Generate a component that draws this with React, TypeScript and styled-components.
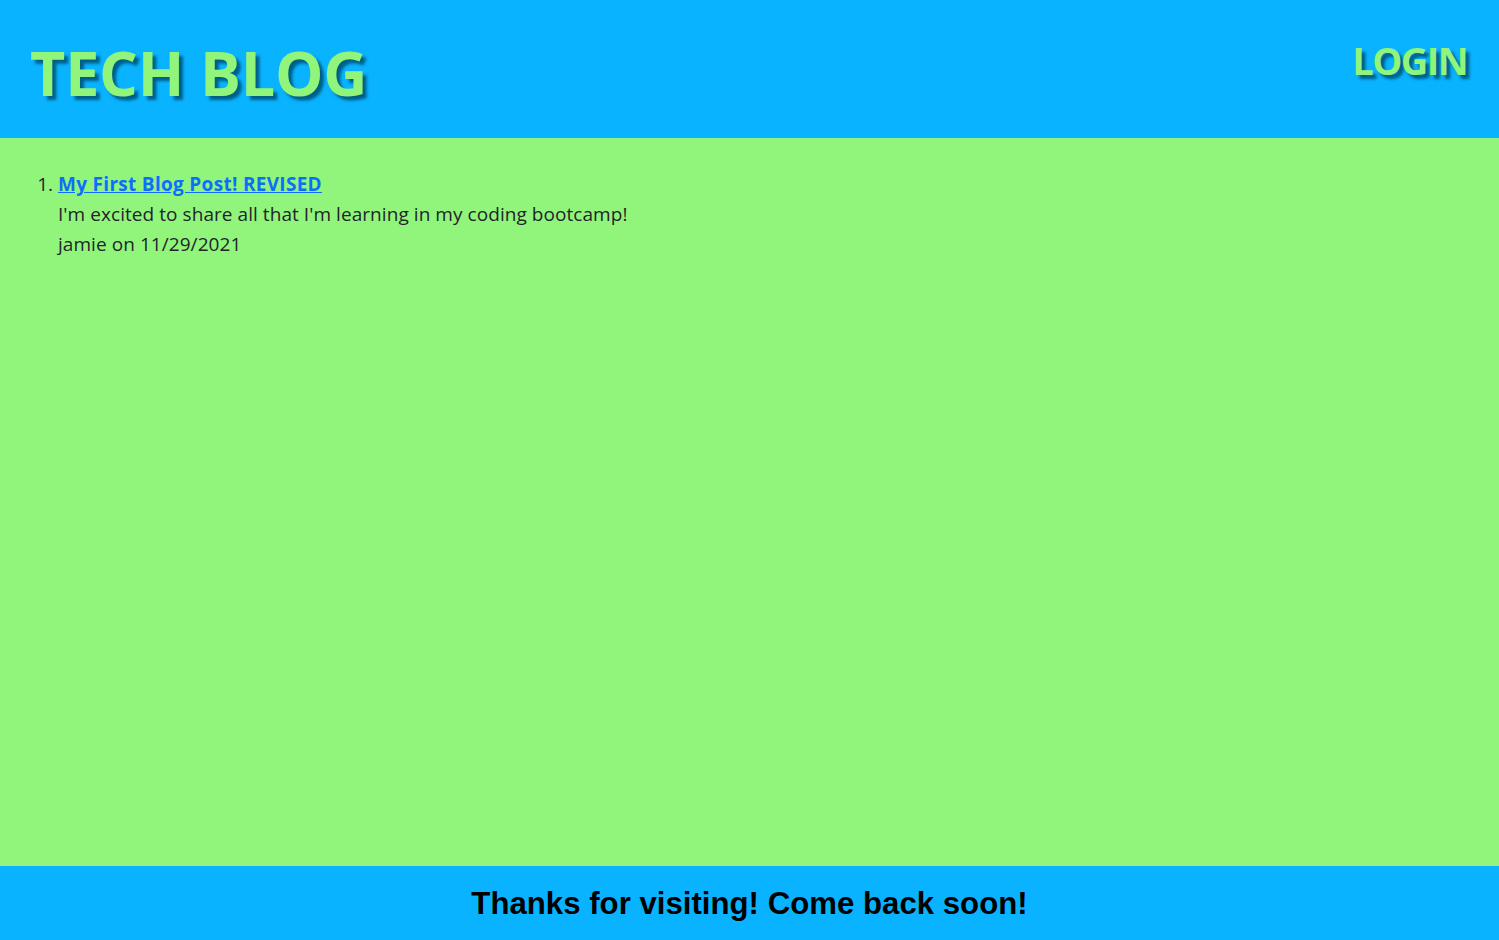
import React from "react";
import styled, { createGlobalStyle } from "styled-components";

const GlobalStyle = createGlobalStyle`
  html, body { margin: 0; padding: 0; height: 100%; }
  body {
    font-family: "Open Sans", "Noto Sans", sans-serif;
    color: #212529;
    background: #91f57b;
  }
  #root { height: 100%; }
`;

const Page = styled.div`
  display: flex;
  flex-direction: column;
  min-height: 940px;
  background: #91f57b;
`;

const Header = styled.header`
  display: flex;
  justify-content: space-between;
  align-items: flex-start;
  height: 138px;
  padding: 0 32px 0 30px;
  box-sizing: border-box;
  background: #09b3ff;
`;

const Title = styled.h1`
  margin: 28px 0 0;
  font-family: "Open Sans", sans-serif;
  font-weight: 700;
  font-size: 61px;
  line-height: 90px;
  color: #91f57b;
  text-shadow: 4px 4px 3px #005f87;
  letter-spacing: -0.2px;
`;

const NavLink = styled.a`
  margin-top: 30px;
  font-family: "Open Sans", sans-serif;
  font-weight: 700;
  font-size: 38px;
  line-height: 60px;
  color: #91f57b;
  text-decoration: none;
  text-shadow: 4px 4px 3px #005f87;
  letter-spacing: -1.6px;
`;

const Main = styled.main`
  flex: 1;
  padding: 31px 0 0 26px;
`;

const PostList = styled.ol`
  margin: 0;
  padding-left: 32px;
  font-size: 19px;
  line-height: 30px;
`;

const PostItem = styled.li`
  padding: 0;
`;

const PostLink = styled.a`
  color: #0d6efd;
  font-weight: 700;
  text-decoration: underline;
  letter-spacing: 0.3px;
`;

const Line = styled.div`
  letter-spacing: 0.06px;
`;

const Footer = styled.footer`
  display: flex;
  justify-content: center;
  align-items: center;
  height: 74px;
  padding-top: 2px;
  box-sizing: border-box;
  background: #09b3ff;
`;

const FooterText = styled.h3`
  margin: 0;
  font-family: "Liberation Sans", Arial, sans-serif;
  font-weight: 700;
  font-size: 31.2px;
  color: #000;
`;

export default function App() {
  return (
    <>
      <GlobalStyle />
      <Page>
        <Header>
          <Title>TECH BLOG</Title>
          <NavLink href="#">LOGIN</NavLink>
        </Header>
        <Main>
          <PostList>
            <PostItem>
              <PostLink href="#">My First Blog Post! REVISED</PostLink>
              <Line>I'm excited to share all that I'm learning in my coding bootcamp!</Line>
              <Line>jamie on 11/29/2021</Line>
            </PostItem>
          </PostList>
        </Main>
        <Footer>
          <FooterText>Thanks for visiting! Come back soon!</FooterText>
        </Footer>
      </Page>
    </>
  );
}
